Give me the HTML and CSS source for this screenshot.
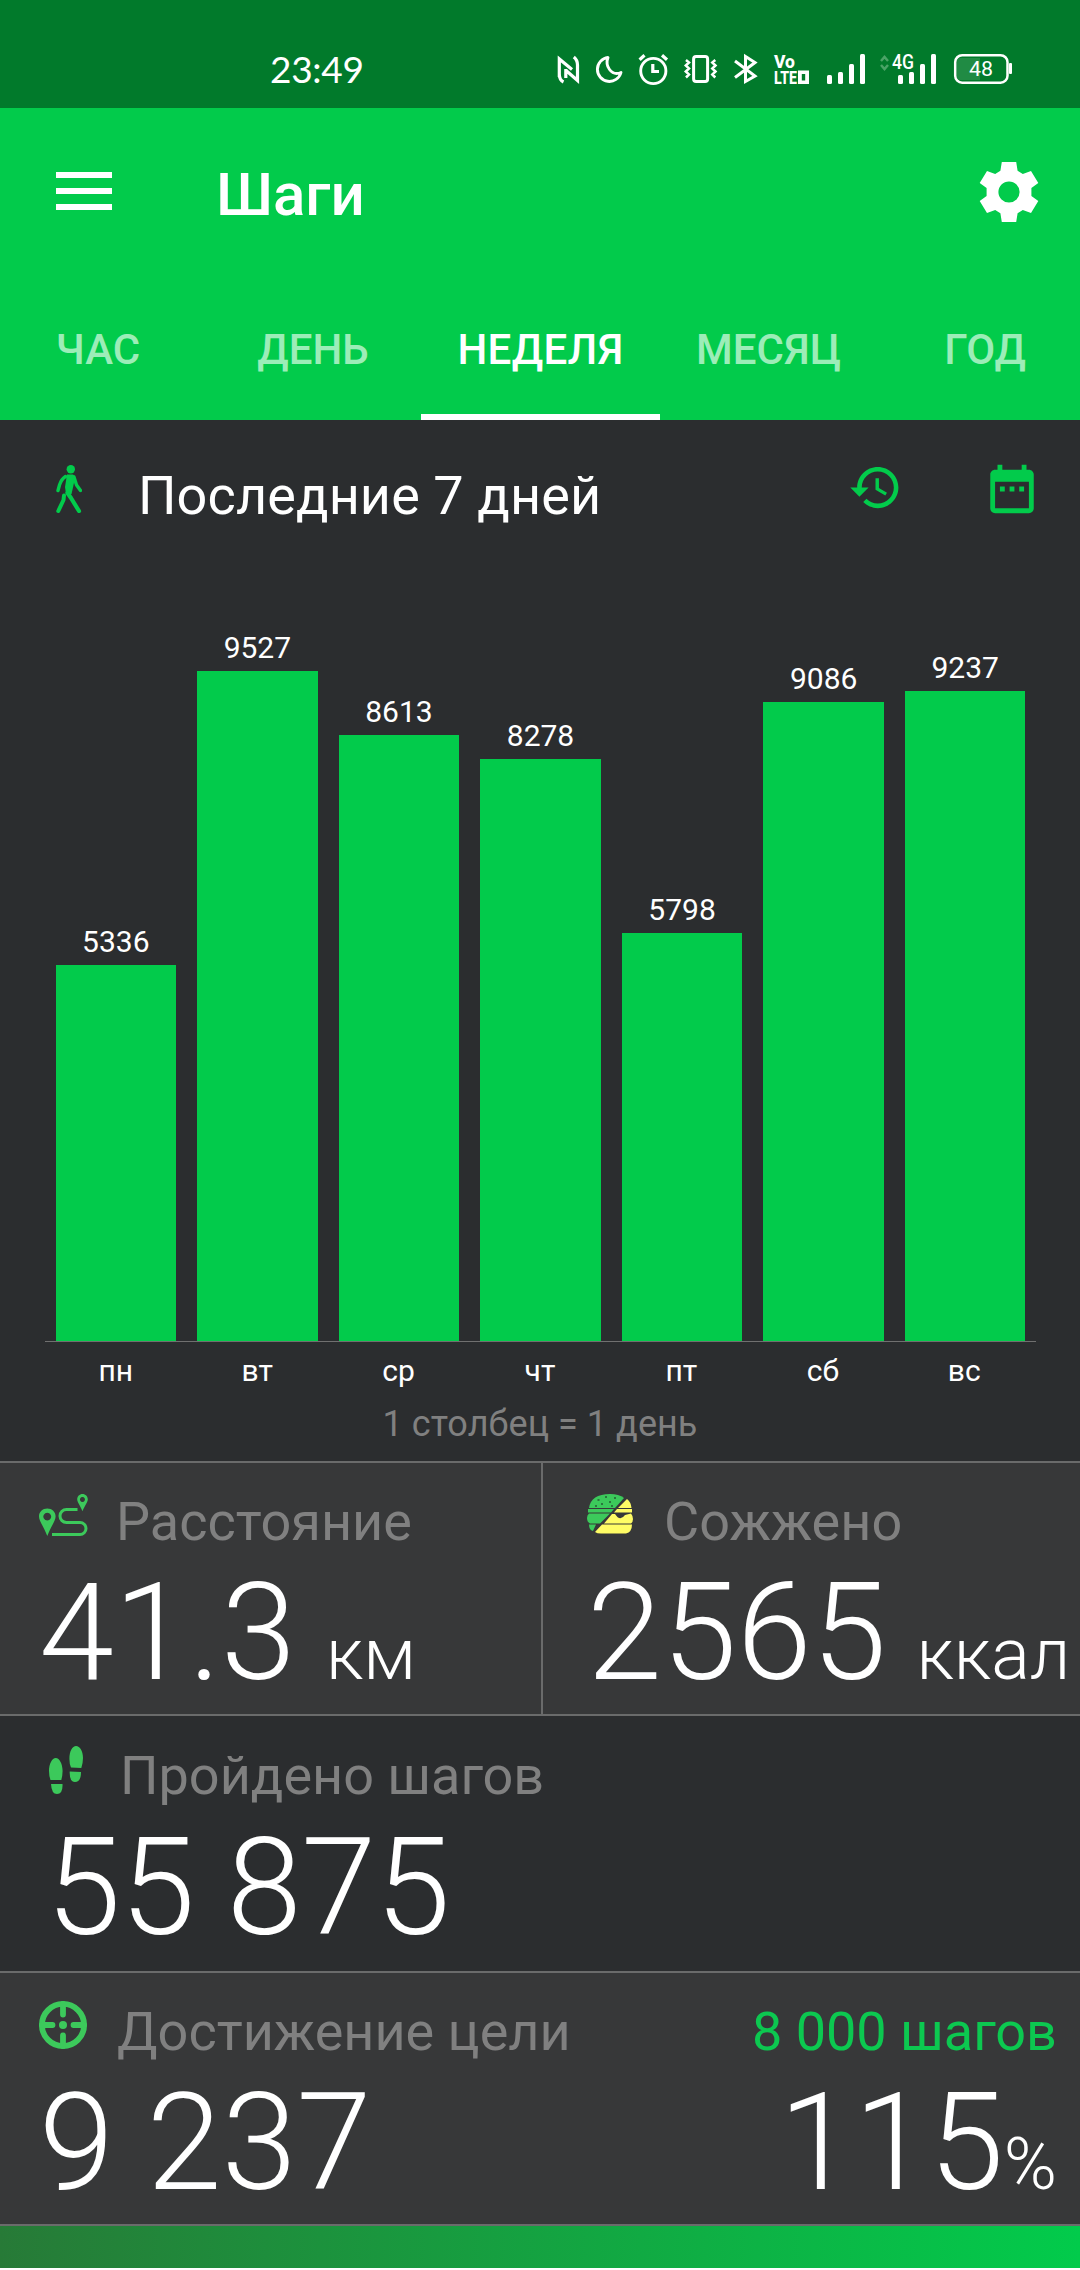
FILE: index.html
```html
<!DOCTYPE html>
<html lang="ru">
<head>
<meta charset="utf-8">
<title>Шаги</title>
<link rel="stylesheet" href="styles.css">
</head>
<body>
<div class="status">
  <span class="clock">23:49</span>
  <div class="status-icons">
    <svg width="36" height="44" viewBox="552 48 36 44" fill="none" stroke="#fff" stroke-width="3.200"><path d="M559.300 77V59L572 69.500M565.500 70L577.500 80.500V65Q577.500 60 573.800 57M565.800 78V69M559.300 74Q559.300 80 563.500 82" /></svg>
    <svg width="43" height="44" viewBox="588 48 43 44" fill="none" stroke="#fff" stroke-width="2.900" stroke-linejoin="round"><path d="M608 57.500A12 12 0 1 0 621 72.500Q614 75.500 609.500 69.500Q605.500 64 608 57.500Z"/></svg>
    <svg width="45" height="44" viewBox="631 48 45 44" fill="none" stroke="#fff" stroke-width="2.900"><circle cx="653.300" cy="71" r="12.600"/><path d="M652.800 64V71.500H659" stroke-width="3.200"/><path d="M639.600 59.800L644.500 55.300M667 59.800L662 55.300" stroke-width="3.200"/></svg>
    <svg width="49" height="44" viewBox="676 48 49 44" fill="none" stroke="#fff" stroke-width="3"><rect x="693.600" y="56.400" width="14" height="25.200" rx="2.500"/><path d="M686 60L689 62.500L685.800 65.500L689 68.500L685.800 71.500L689 74.500L686 77.500M715.300 60L712.300 62.500L715.500 65.500L712.300 68.500L715.500 71.500L712.300 74.500L715.300 77.500" stroke-width="2.500"/></svg>
    <svg width="41" height="44" viewBox="725 48 41 44" fill="none" stroke="#fff" stroke-width="3"><path d="M735 61L755 76L745.500 81.500V56.500L755 62.500L735 77.500"/></svg>
    <svg class="glyphs" width="52" height="44" viewBox="766 48 52 44" fill="#fff"><text x="774" y="68" font-size="18" textLength="21" lengthAdjust="spacingAndGlyphs">Vo</text><text x="774" y="84" font-size="18.500" textLength="23" lengthAdjust="spacingAndGlyphs">LTE</text><path d="M798 70.500H809V84H798ZM801.800 74V80.500H805.200V74Z" fill-rule="evenodd"/></svg>
    <svg width="54" height="44" viewBox="818 48 54 44" fill="#fff"><rect x="827" y="75" width="5" height="9" rx="1.500"/><rect x="838" y="72" width="5" height="12" rx="1.500"/><rect x="849" y="64" width="5" height="20" rx="1.500"/><rect x="860" y="54" width="5" height="30" rx="1.500"/></svg>
    <svg class="glyphs" width="72" height="44" viewBox="872 48 72 44" fill="#fff"><path d="M881 61L884.500 57L888 61M881 65L884.500 69L888 65" fill="none" stroke="#4aa366" stroke-width="2.500"/><text x="892" y="69" font-size="20" font-weight="500" textLength="22" lengthAdjust="spacingAndGlyphs">4G</text><rect x="898" y="75" width="5" height="9" rx="1.500"/><rect x="909" y="72" width="5" height="12" rx="1.500"/><rect x="920" y="64" width="5" height="20" rx="1.500"/><rect x="931" y="54" width="5" height="30" rx="1.500"/></svg>
    <svg class="glyphs" width="76" height="44" viewBox="944 48 76 44" fill="#fff"><path d="M960 58H980V80H960Q957 80 957 76V62Q957 58 960 58Z" fill="#208b44"/><rect x="955.200" y="55.200" width="52.300" height="27.500" rx="7" fill="none" stroke="#fff" stroke-width="2.500"/><rect x="1009" y="63" width="3" height="11" rx="1"/><text x="969" y="76" font-size="21" font-weight="400" textLength="24" lengthAdjust="spacingAndGlyphs">48</text></svg>
  </div>
</div>

<header class="appbar">
  <div class="toolbar">
    <div class="menu"><i></i><i></i><i></i></div>
    <h1>Шаги</h1>
    <svg class="gear" width="60" height="60" viewBox="-30 -30 60 60" fill="#fff"><path fill-rule="evenodd" d="M-7.200-30H7.200L8.600-21.300L13.800-18L22-21L29.300-9L22.400-4V4L29.300 9L22 21L13.800 18L8.600 21.300L7.200 30H-7.200L-8.600 21.300L-13.800 18L-22 21L-29.300 9L-22.400 4V-4L-29.300-9L-22-21L-13.800-18L-8.600-21.300ZM0-10.600A10.600 10.600 0 1 0 0 10.600A10.600 10.600 0 1 0 0-10.600Z"/></svg>
  </div>
  <nav class="tabs">
    <span class="tab hour">ЧАС</span>
    <span class="tab">ДЕНЬ</span>
    <span class="tab active">НЕДЕЛЯ</span>
    <span class="tab month">МЕСЯЦ</span>
    <span class="tab">ГОД</span>
  </nav>
</header>

<section class="chart-card">
  <div class="chart-head">
    <svg class="walk" width="26" height="48" viewBox="0 0 26 48" fill="none" stroke="#02cb4b" stroke-linecap="round" stroke-linejoin="round"><circle cx="14.800" cy="4.200" r="4.200" fill="#02cb4b" stroke="none"/><path d="M11 9.500H17Q19 10 19 13L17 22.500L15.500 29H10L9 22Z" fill="#02cb4b" stroke="none"/><path d="M9.500 11.500Q5.500 14 3.500 20L2 25.500M18 12L20.500 20L24.500 25.500" stroke-width="3.400"/><path d="M11.500 28L15 33L23 46" stroke-width="4.200"/><path d="M8 30.500L7.500 35L2.300 46" stroke-width="4"/></svg>
    <h2>Последние 7 дней</h2>
    <svg width="55" height="55" viewBox="0 0 24 24" fill="#02cb4b"><path d="M13 3c-4.970 0-9 4.030-9 9H1l3.890 3.890.07.14L9 12H6c0-3.870 3.130-7 7-7s7 3.130 7 7-3.130 7-7 7c-1.930 0-3.680-.79-4.940-2.060l-1.420 1.420C8.270 19.990 10.510 21 13 21c4.970 0 9-4.030 9-9s-4.030-9-9-9zm-1 5v5l4.280 2.540.72-1.210-3.500-2.080V8H12z"/></svg>
    <svg class="calendar" width="58" height="58" viewBox="0 0 24 24" fill="#02cb4b"><path d="M9 11H7v2h2v-2zm4 0h-2v2h2v-2zm4 0h-2v2h2v-2zm2-7h-1V2h-2v2H8V2H6v2H5c-1.110 0-1.990.9-1.990 2L3 20c0 1.100.89 2 2 2h14c1.100 0 2-.9 2-2V6c0-1.100-.9-2-2-2zm0 16H5V9h14v11z"/></svg>
  </div>
  <div class="plot">
    <div class="col"><span>5336</span><div class="bar" style="height:375.6px"></div></div>
    <div class="col"><span>9527</span><div class="bar" style="height:670px"></div></div>
    <div class="col"><span>8613</span><div class="bar" style="height:605.7px"></div></div>
    <div class="col"><span>8278</span><div class="bar" style="height:582.2px"></div></div>
    <div class="col"><span>5798</span><div class="bar" style="height:407.8px"></div></div>
    <div class="col"><span>9086</span><div class="bar" style="height:639px"></div></div>
    <div class="col"><span>9237</span><div class="bar" style="height:649.6px"></div></div>
  </div>
  <div class="days"><span>пн</span><span>вт</span><span>ср</span><span>чт</span><span>пт</span><span>сб</span><span>вс</span></div>
  <p class="caption">1 столбец = 1 день</p>
</section>

<section class="stats split">
  <div class="stat distance">
    <div class="label">
      <svg width="49" height="42" viewBox="0 0 49 42" fill="#3cc95b"><path fill-rule="evenodd" d="M8.300 14.500C3.600 14.500 0 18 0 22.500C0 27 4.500 32 8.300 42C12 32 16.600 27 16.600 22.500C16.600 18 13 14.500 8.300 14.500ZM8.300 18.700A3.900 3.900 0 1 1 8.200 18.700Z"/><path fill-rule="evenodd" d="M43.500 0C40.500 0 38.200 2.300 38.200 5.300C38.200 8.500 41 11 43.500 17.300C46 11 48.800 8.500 48.800 5.300C48.800 2.300 46.500 0 43.500 0ZM43.500 2.900A2.500 2.500 0 1 1 43.400 2.900Z"/><path d="M38.500 15.500H27.500A6.500 6.500 0 0 0 27.500 28.500H41A6 6 0 0 1 41 40.500H13" fill="none" stroke="#3cc95b" stroke-width="3"/></svg>
      <span>Расстояние</span>
    </div>
    <div class="value">41.3<small>км</small></div>
  </div>
  <div class="stat burned">
    <div class="label">
      <svg width="46" height="40" viewBox="0 0 46 40"><path d="M2 14Q4 0 23 0Q32 0 37 4L28 14Z" fill="#3cc95b"/><path d="M1 15H27L24 18.500H1Z" fill="#3cc95b"/><path d="M2 19.500H23L13 29.500H3Q0 28 0 24Q0 21 2 19.500ZM2 30.500H9L6 37Q2 36 2 30.500Z" fill="#3cc95b"/><path d="M40 5Q44 8 44.500 14H31ZM30 15H45V18.500H27Z" fill="#fffc65"/><path d="M25 20H28Q33 28 38 21L44 19.500Q46 22 46 25Q46 28 44 29.500H17ZM15 30.500H45Q45 38 39 39.500H14Q10 39.500 8 38Z" fill="#fffc65"/><path d="M10.500 6h2M18 3h2M27 4h2M14 10h2M22 8h2M8 12h2M24 12h2" stroke="#245c34" stroke-width="1.500"/></svg>
      <span>Сожжено</span>
    </div>
    <div class="value">2565<small>ккал</small></div>
  </div>
</section>

<section class="stats steps">
  <div class="label">
    <svg width="34" height="48" viewBox="0 0 34 48" fill="#3cc95b"><path d="M6.800 12C10.500 12 13.600 18 13.600 25Q13.500 30 12.300 34H1.500Q0 30 0 25C0 18 3 12 6.800 12ZM2 38H13.500Q14 48 8 48Q2.500 48 2 38ZM27 0C23.500 0 20.400 5 20.400 13Q20.400 18 22 21.500L32.300 22Q34 17 34 12C34 5 31 0 27 0ZM20.700 25.500L32 26Q32 36 26 36Q20.300 36 20.700 25.500Z"/></svg>
    <span>Пройдено шагов</span>
  </div>
  <div class="value">55 875</div>
</section>

<section class="stats goal">
  <div>
    <div class="label">
      <svg width="48" height="48" viewBox="0 0 48 48" fill="none" stroke="#3cc95b" stroke-width="5.800"><circle cx="24" cy="24" r="21.100"/><path d="M24 3V13.500M24 34.500V45M3 24H13.500M34.500 24H45" stroke-linecap="round"/><circle cx="24" cy="24" r="4" fill="#3cc95b" stroke="none"/></svg>
      <span>Достижение цели</span>
    </div>
    <div class="value">9 237</div>
  </div>
  <div class="right">
    <div class="target">8 000 шагов</div>
    <div class="value">115<small>%</small></div>
  </div>
</section>
<div class="progress"></div>
</body>
</html>
```
FILE: styles.css
```css
* { box-sizing: border-box; }
body {
  margin: 0;
  width: 1080px;
  height: 2270px;
  overflow: hidden;
  background: #fff;
  color: #fff;
  font-family: Roboto, "Liberation Sans", sans-serif;
}
svg { display: block; flex: none; }
h1, h2, p { margin: 0; font-weight: 400; }

.status {
  display: flex;
  justify-content: space-between;
  height: 108px;
  padding: 48px 60px 0 270px;
  background: #017a2b;
}
.clock { margin-top: 4px; font: 400 37px/34px Lato, sans-serif; letter-spacing: -0.3px; }
.status-icons { display: flex; }
.glyphs { font-family: Roboto, sans-serif; font-weight: 800; }

.appbar {
  display: flex;
  flex-direction: column;
  justify-content: space-between;
  height: 312px;
  overflow: hidden;
  background: #02cb4b;
}
.toolbar { display: flex; align-items: flex-start; padding: 54px 41px 0 56px; }
.menu { display: flex; flex-direction: column; gap: 10px; width: 56px; margin-top: 10px; }
.menu i { height: 6px; background: #fff; }
.toolbar h1 {
  flex: 1;
  margin-left: 104px;
  font-size: 60px;
  font-weight: 500;
  line-height: 66px;
}
.tabs { display: flex; height: 126px; margin-left: -11px; }
.tab {
  flex: 0 0 216px;
  height: 126px;
  padding-top: 31px;
  color: #9cedb8;
  font-size: 42px;
  font-weight: 500;
  line-height: 50px;
  text-align: center;
}
.tab.hour { padding-left: 2px; }
.tab.active { flex-basis: 239px; color: #fff; border-bottom: 6px solid #fff; letter-spacing: 0.3px; }
.tab.month { flex-basis: 217px; }

.chart-card { height: 1041px; padding-top: 40px; background: #2b2d2f; }
.chart-head { display: flex; align-items: flex-start; height: 72px; padding: 0 39px 0 56px; }
.walk { margin: 5px 56px 0 0; }
.chart-head h2 { flex: 1; margin-top: 4px; font-size: 54px; line-height: 64px; letter-spacing: 0.1px; }
.calendar { margin-left: 80px; }
.plot, .days {
  display: grid;
  grid-template-columns: repeat(7, 1fr);
  width: 991px;
  margin-left: 45px;
  font-size: 30px;
  line-height: 36px;
  text-align: center;
}
.plot { height: 809px; }
.col { display: flex; flex-direction: column; justify-content: flex-end; align-items: center; }
.col span { padding-bottom: 5px; }
.bar { width: 85%; background: #02cb4b; }
.days { padding: 11px 1px 0 0; border-top: 1px solid #707070; }
.caption { margin-top: 13px; color: #808080; font-size: 36px; line-height: 44px; text-align: center; letter-spacing: 0.06px; }

.stats { border-top: 2px solid #6a6b6b; background: #373839; }
.label { display: flex; align-items: flex-start; height: 64px; color: #808080; font-size: 54px; line-height: 64px; }
.value { font-size: 135px; font-weight: 300; line-height: 160px; white-space: nowrap; }
.value small { font-size: 72px; }
.split { display: grid; grid-template-columns: 543px 1fr; height: 253px; }
.stat { height: 251px; padding-top: 26px; }
.stat .value { height: 160px; }
.stat svg { margin-top: 5px; }
.stat .label span { margin-top: 1px; }
.distance { padding-left: 39px; border-right: 2px solid #6a6b6b; }
.distance .label { gap: 28px; }
.distance small { margin-left: 30px; }
.burned { padding-left: 44px; }
.burned .label { gap: 31px; }
.burned small { margin-left: 30px; }
.steps { height: 257px; padding: 28px 0 0 49px; background: #2b2d2f; }
.steps .label { gap: 37px; }
.steps svg { margin-top: 2px; }
.steps .value { margin-left: -3px; letter-spacing: -0.6px; }
.goal { display: flex; justify-content: space-between; height: 253px; padding: 26px 23px 0 39px; }
.goal .label { gap: 30px; }
.goal svg { margin-top: 2px; }
.goal .label span, .target { padding-top: 1px; }
.right { text-align: right; }
.target { height: 64px; color: #0cc850; font-size: 54px; line-height: 64px; }
.progress { height: 44px; border-top: 2px solid #6a6b6b; background: linear-gradient(90deg, #277a37, #02cb4b); }
```
